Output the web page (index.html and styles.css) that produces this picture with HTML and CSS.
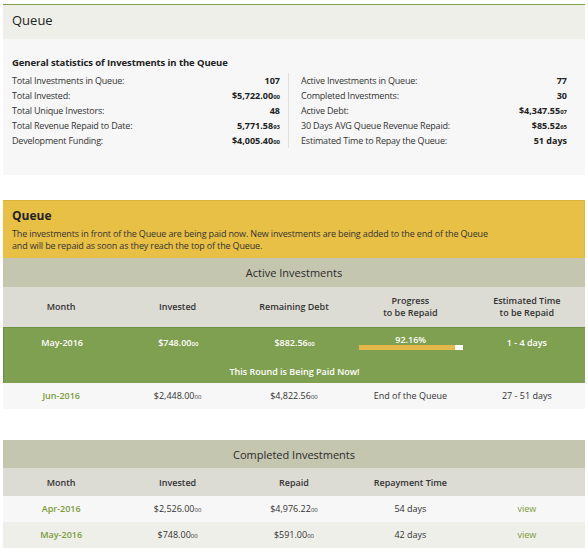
FILE: index.html
```html
<!DOCTYPE html>
<html>
<head>
<meta charset="utf-8">
<link rel="stylesheet" href="styles.css">
</head>
<body>
<div class="page">
  <section class="panel">
    <div class="panel-head">Queue</div>
    <div class="panel-body">
      <h3 class="stats-title">General statistics of Investments in the Queue</h3>
      <div class="stats">
        <div class="stats-col">
          <div class="stat"><span>Total Investments in Queue:</span><b>107</b></div>
          <div class="stat"><span>Total Invested:</span><b>$5,722.00<small>00</small></b></div>
          <div class="stat"><span>Total Unique Investors:</span><b>48</b></div>
          <div class="stat"><span>Total Revenue Repaid to Date:</span><b>5,771.58<small>93</small></b></div>
          <div class="stat"><span>Development Funding:</span><b>$4,005.40<small>00</small></b></div>
        </div>
        <div class="stats-col right">
          <div class="stat"><span>Active Investments in Queue:</span><b>77</b></div>
          <div class="stat"><span>Completed Investments:</span><b>30</b></div>
          <div class="stat"><span>Active Debt:</span><b>$4,347.55<small>07</small></b></div>
          <div class="stat"><span>30 Days AVG Queue Revenue Repaid:</span><b>$85.52<small>65</small></b></div>
          <div class="stat"><span>Estimated Time to Repay the Queue:</span><b>51 days</b></div>
        </div>
      </div>
    </div>
  </section>

  <section class="notice">
    <h2>Queue</h2>
    <p>The investments in front of the Queue are being paid now. New investments are being added to the end of the Queue<br>and will be repaid as soon as they reach the top of the Queue.</p>
  </section>

  <div class="table-title">Active Investments</div>
  <div class="row head tall">
    <div>Month</div><div>Invested</div><div>Remaining Debt</div><div>Progress<br>to be Repaid</div><div>Estimated Time<br>to be Repaid</div>
  </div>
  <div class="current">
    <div class="row cur-row">
      <div>May-2016</div>
      <div>$748.00<small>00</small></div>
      <div>$882.56<small>00</small></div>
      <div class="prog">
        <span class="pct">92.16%</span>
        <span class="bar"><span class="fill" style="width:92.16%"></span></span>
      </div>
      <div>1 - 4 days</div>
    </div>
    <div class="paid-now">This Round is Being Paid Now!</div>
  </div>
  <div class="row data light">
    <div class="month">Jun-2016</div><div>$2,448.00<small>00</small></div><div>$4,822.56<small>00</small></div><div>End of the Queue</div><div>27 - 51 days</div>
  </div>

  <div class="table-title completed">Completed Investments</div>
  <div class="row head">
    <div>Month</div><div>Invested</div><div>Repaid</div><div>Repayment Time</div><div></div>
  </div>
  <div class="row data light">
    <div class="month">Apr-2016</div><div>$2,526.00<small>00</small></div><div>$4,976.22<small>00</small></div><div>54 days</div><div class="view">view</div>
  </div>
  <div class="row data dark">
    <div class="month">May-2016</div><div>$748.00<small>00</small></div><div>$591.00<small>00</small></div><div>42 days</div><div class="view">view</div>
  </div>
</div>
</body>
</html>
```

FILE: styles.css
```css
* { box-sizing: border-box; }
html, body { margin: 0; padding: 0; background: #fff; }
body {
  font-family: "Open Sans", "DejaVu Sans", sans-serif;
  font-size: 9px;
  color: #333;
}
.page {
  width: 582px;
  margin: 4px 0 0 3px;
}
small { font-size: 6px; line-height: 1; }

.panel { border-top: 1px solid #7ea24c; }
.panel-head {
  background: #efefe9;
  height: 34px;
  padding: 6px 9px 0;
  font-size: 13px;
  color: #222;
}
.panel-body {
  background: #f7f7f7;
  height: 136px;
  padding: 16px 9px 0;
}
.stats-title {
  margin: 0 0 3px;
  font-size: 9.5px;
  font-weight: 700;
  color: #222;
  line-height: 15px;
  letter-spacing: -0.1px;
}
.stats { display: flex; }
.stats-col { width: 276px; padding-right: 8px; }
.stats-col.right {
  border-left: 1px solid #e0e0e0;
  padding-left: 12px;
  padding-right: 0;
  width: 279px;
}
.stat {
  display: flex;
  justify-content: space-between;
  align-items: baseline;
  height: 15px;
  line-height: 15px;
  letter-spacing: -0.2px;
}
.stat b { font-weight: 700; color: #222; letter-spacing: 0; }

.notice {
  margin-top: 25px;
  background: #e9c046;
  border-top: 1px solid #e0b43c;
  border-right: 1px solid #e3b53a;
  height: 58px;
  padding: 7px 9px 0;
}
.notice h2 {
  margin: 0 0 4px;
  font-size: 12px;
  font-weight: 700;
  color: #222;
  line-height: 16px;
}
.notice p { margin: 0; line-height: 12px; color: #333; letter-spacing: -0.15px; }

.table-title {
  background: #c5c6b0;
  height: 29px;
  line-height: 29px;
  text-align: center;
  font-size: 11px;
  color: #2a2a2a;
}
.table-title.completed { margin-top: 31px; height: 28px; line-height: 29px; }

.row { display: grid; grid-template-columns: repeat(5, 1fr); align-items: center; text-align: center; }
.row.head { background: #dcdcd4; height: 28px; font-weight: 600; color: #333; }
.row.head.tall { height: 40px; line-height: 12px; }
.row.data { height: 26px; line-height: 14px; }
.row.light { background: #f7f7f7; }
.row.dark { background: #efefe9; }
.month { color: #7a9a3a; font-weight: 600; }
.view { color: #7a9a3a; }

.current {
  background: #7fa050;
  border-top: 1px solid #6d9040;
  border-left: 1px solid #6d9040;
  height: 56px;
  color: #fff;
  font-weight: 600;
}
.cur-row { height: 29px; line-height: 14px; }
.prog { display: flex; flex-direction: column; align-items: center; }
.pct { line-height: 10px; }
.bar {
  display: block;
  width: 104px;
  height: 5px;
  background: #fff;
}
.fill { display: block; height: 100%; background: #e4b84a; }
.paid-now { text-align: center; padding-top: 8px; line-height: 14px; }
```
